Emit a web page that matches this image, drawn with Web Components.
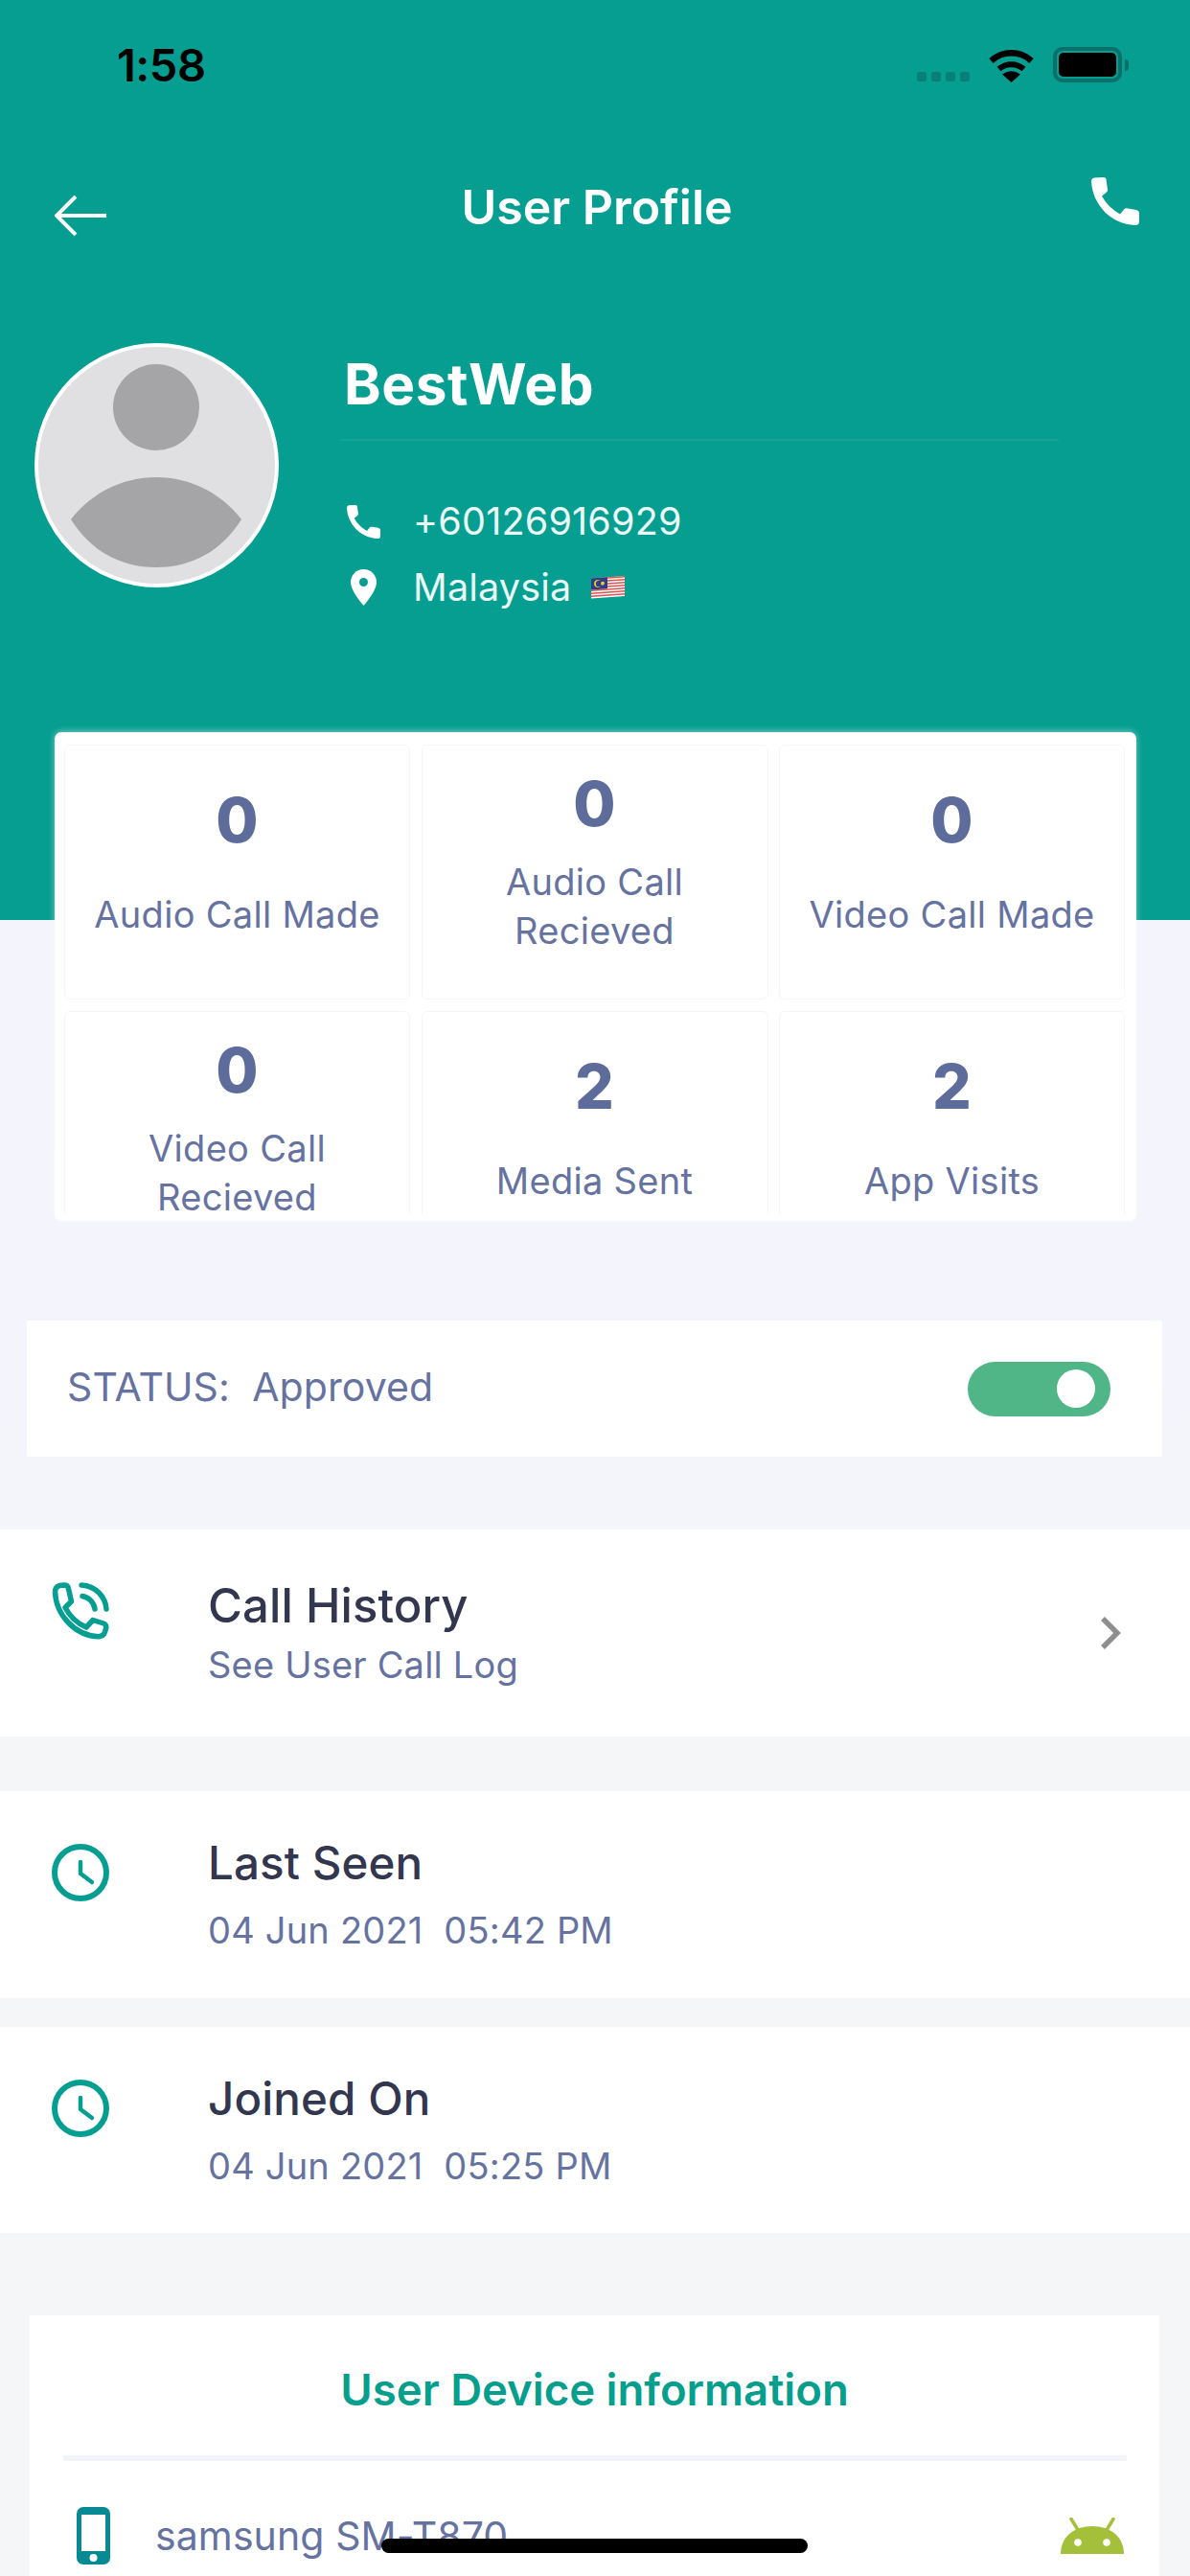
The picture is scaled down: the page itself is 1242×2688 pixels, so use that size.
<!DOCTYPE html>
<html lang="en">
<head>
<meta charset="utf-8">
<title>User Profile</title>
<style>
html,body{margin:0;padding:0;background:#F4F5F9;}
body{font-family:Inter,"Liberation Sans",sans-serif;overflow:hidden;width:1242px;height:2688px;}
</style>
</head>
<body>
<x-app>
  <x-profile-header>
    <x-status-bar time="1:58"></x-status-bar>
    <x-nav-bar>User Profile</x-nav-bar>
    <x-profile-head name="BestWeb" phone="+60126916929" country="Malaysia"></x-profile-head>
  </x-profile-header>
  <x-stat-grid>
    <x-stat-cell value="0">Audio Call Made</x-stat-cell>
    <x-stat-cell value="0" two>Audio Call<br>Recieved</x-stat-cell>
    <x-stat-cell value="0">Video Call Made</x-stat-cell>
    <x-stat-cell value="0" two>Video Call<br>Recieved</x-stat-cell>
    <x-stat-cell value="2">Media Sent</x-stat-cell>
    <x-stat-cell value="2">App Visits</x-stat-cell>
  </x-stat-grid>
  <x-status-card>STATUS:  Approved</x-status-card>
  <x-info-row icon="call" heading="Call History" compact chevron style="margin-top:76px;height:216px">See User Call Log</x-info-row>
  <x-info-row icon="clock" heading="Last Seen" style="margin-top:57px;height:216px">04 Jun 2021  05:42 PM</x-info-row>
  <x-info-row icon="clock" heading="Joined On" style="margin-top:30px;height:215px">04 Jun 2021  05:25 PM</x-info-row>
  <x-device-card heading="User Device information">samsung SM-T870</x-device-card>
  <x-home-indicator></x-home-indicator>
</x-app>
<script>
const PHONE = `<path d="M3 .5 13 0Q15 0 15.5 2L17 13Q17 15 15.5 16L11 19.5Q17 31 30 38.5L34.5 33Q36 32 38 32.5L47 34Q50 35 50 37V46Q50 50 46 50C20 49 1 28 0 4Q0 1 3 .5Z" fill="#fff"/>`;
function def(name, html, setup){
  customElements.define(name, class extends HTMLElement{
    constructor(){
      super();
      this.attachShadow({mode:'open'});
    }
    connectedCallback(){
      if(this.shadowRoot.childElementCount) return;
      const a = n => this.getAttribute(n) || '';
      this.shadowRoot.innerHTML = typeof html === 'function' ? html(a, this) : html;
    }
  });
}
def('x-app', `<style>
:host{display:flex;flex-direction:column;position:relative;width:1242px;height:2688px;overflow:hidden;
font-family:Inter,"Liberation Sans",sans-serif;background:linear-gradient(#F4F5FC 1000px,#F4F5FB 1500px,#F4F6F8 1800px);}
</style><slot></slot>`);

def('x-profile-header', `<style>
:host{display:flex;flex-direction:column;height:960px;flex:none;background:#069E91;color:#fff;}
</style><slot></slot>`);

def('x-status-bar', a => `<style>
:host{display:flex;align-items:center;justify-content:space-between;height:135px;padding:0 64px 0 122px;box-sizing:border-box;}
.t{font-size:47px;font-weight:600;color:#000;letter-spacing:-.5px;line-height:56px;}
.r{display:flex;align-items:center;gap:20px;}
.dots{display:flex;gap:5px;padding-top:25px;}
.dots i{width:10px;height:10px;border-radius:2.5px;background:#0A7F77;}
.bat{display:flex;align-items:center;gap:3px;}
.b{width:72px;height:37px;box-sizing:border-box;border:4px solid #0B6F6A;border-radius:10px;padding:2px;display:flex;}
.b i{flex:1;background:#000;border-radius:5px;}
.n{width:4px;height:12px;background:#0B6F6A;border-radius:0 4px 4px 0;}
svg{display:block;}
</style>
<span class="t">${a('time')}</span>
<div class="r">
<div class="dots"><i></i><i></i><i></i><i></i></div>
<svg width="47" height="36" viewBox="0 0 47 36"><path d="M2.5 13.5C14.5 2.5 32.5 2.5 44.5 13.5" fill="none" stroke="#000" stroke-width="6.5"/><path d="M10.5 22C18 15.5 29 15.5 36.5 22" fill="none" stroke="#000" stroke-width="6"/><path d="M23.5 36 14 27.5Q23.5 21 33 27.5Z"/></svg>
<div class="bat"><div class="b"><i></i></div><div class="n"></div></div>
</div>`);

def('x-nav-bar', `<style>
:host{display:grid;grid-template-columns:1fr auto 1fr;align-items:start;height:75px;margin-top:40px;padding:0 53px 0 57px;}
.back{margin-top:29px;display:block;}
.title{margin-top:17px;font-size:50px;font-weight:600;line-height:48px;color:#fff;}
.call{justify-self:end;margin-top:10px;display:block;}
</style>
<svg class="back" width="54" height="42" viewBox="0 0 54 42"><path d="M54 21H2M22 1 2 21 22 41" fill="none" stroke="#fff" stroke-width="4"/></svg>
<span class="title"><slot></slot></span>
<svg class="call" width="50" height="50" viewBox="0 0 50 50">${PHONE}</svg>`);

def('x-profile-head', a => `<style>
:host{display:flex;gap:64px;margin-top:108px;padding-left:36px;}
.av{width:255px;height:255px;flex:none;display:block;}
.col{width:750px;padding-top:9px;}
.name{font-size:58.5px;font-weight:700;line-height:68px;letter-spacing:.6px;color:#fff;padding-left:4px;}
.hr{height:2px;background:rgba(255,255,255,.07);margin-top:23px;}
.row{display:flex;align-items:center;height:44px;font-size:39.5px;line-height:44px;color:#EAF8F6;letter-spacing:.2px;}
.ic{width:45px;margin:0 29px 0 2px;display:flex;justify-content:center;}
.r1{margin-top:62px}.r2{margin-top:25px}
.flag{margin-left:21px;display:block;}
svg{display:block;}
</style>
<svg class="av" viewBox="0 0 255 255"><circle cx="127.5" cy="127.5" r="125.5" fill="#E0DFE1" stroke="#fff" stroke-width="4"/><circle cx="127" cy="67" r="45" fill="#A5A4A6"/><path d="M38 184C58 158 90 140 127 140S196 158 216 184C196 216 165 234 127 234S58 216 38 184Z" fill="#A5A4A6"/></svg>
<div class="col">
<div class="name">${a('name')}</div>
<div class="hr"></div>
<div class="row r1"><span class="ic"><svg width="35" height="35" viewBox="0 0 50 50">${PHONE}</svg></span><span>${a('phone')}</span></div>
<div class="row r2"><span class="ic"><svg width="27" height="38" viewBox="0 0 27 38"><path d="M13.5 0C6 0 0 6 0 13.5 0 23 13.5 38 13.5 38S27 23 27 13.5C27 6 21 0 13.5 0Z" fill="#fff"/><circle cx="13.5" cy="13.5" r="4.5" fill="#069E91"/></svg></span><span>${a('country')}</span>
<svg class="flag" width="35" height="24" viewBox="0 0 35 24"><g transform="skewY(-4) translate(0 2.5)"><rect width="35" height="21" fill="#fff"/><g fill="#D9534F"><rect width="35" height="1.5"/><rect y="3" width="35" height="1.5"/><rect y="6" width="35" height="1.5"/><rect y="9" width="35" height="1.5"/><rect y="12" width="35" height="1.5"/><rect y="15" width="35" height="1.5"/><rect y="18" width="35" height="1.5"/></g><rect width="17" height="12" fill="#2A3F86"/><circle cx="7" cy="6" r="4" fill="#F4C430"/><circle cx="8.2" cy="6" r="3.3" fill="#2A3F86"/><circle cx="12" cy="6" r="2" fill="#F4C430"/></g></svg>
</div>
</div>`);

def('x-stat-grid', `<style>
:host{display:block;flex:none;width:1129px;height:510px;margin:-196px 0 0 57px;background:#fff;border-radius:7px;box-shadow:0 -1px 6px rgba(255,255,255,.45);box-sizing:border-box;padding:13px 12px 7px 10px;}
.clip{height:100%;overflow:hidden;}
.g{display:grid;grid-template-columns:361px 362px 361px;grid-auto-rows:266px;column-gap:11.5px;row-gap:12px;}
</style><div class="clip"><div class="g"><slot></slot></div></div>`);

def('x-stat-cell', a => `<style>
:host{display:flex;flex-direction:column;align-items:center;border:1.5px solid #F6F6F9;border-radius:6px;box-sizing:border-box;padding-top:53px;--g:49px;text-align:center;}
:host([two]){padding-top:36px;--g:32px;}
.v{font-size:64px;font-weight:800;line-height:49px;color:#5E6C9B;}
.l{margin-top:var(--g);font-size:38px;line-height:51px;color:#66729F;letter-spacing:.3px;}
</style><div class="v">${a('value')}</div><div class="l"><slot></slot></div>`);

def('x-status-card', `<style>
:host{display:flex;align-items:center;justify-content:space-between;flex:none;box-sizing:border-box;width:1185px;height:142px;margin:104px 0 0 28px;padding:0 54px 0 42px;background:#fff;color:#66729F;font-size:41px;white-space:pre;letter-spacing:.1px;}
.txt{margin-top:-5px;}
.tg{width:149px;height:57px;border-radius:28.5px;background:#50B687;display:flex;align-items:center;justify-content:flex-end;padding-right:16px;box-sizing:border-box;}
.tg i{width:40px;height:40px;border-radius:50%;background:#fff;}
</style><span class="txt"><slot></slot></span><div class="tg"><i></i></div>`);

def('x-info-row', (a, el) => {
  const icon = a('icon') === 'call'
    ? `<svg width="60" height="60" viewBox="0 0 60 60" fill="none" stroke="#069E91" stroke-width="5.5" stroke-linecap="round" stroke-linejoin="round"><path d="M3.5 10Q3.5 5 8 3.5L13 3Q16.5 3 17.3 6L20.5 20 14 26.5Q22 41 36 47L43 39.5 54 43Q57 44 56.8 47.5L55.5 52Q54 56.5 49 56.7C25 56 4.5 35 3.5 10Z"/><path d="M31 3C46 4 56 15 57 28"/><path d="M32 14.5C39 16 44 21 45 28"/></svg>`
    : `<svg width="60" height="60" viewBox="0 0 60 60" fill="none" stroke="#069E91"><circle cx="30" cy="30" r="27" stroke-width="6"/><path d="M30 19V31L42 40" stroke-width="4.5" stroke-linecap="round" stroke-linejoin="round"/></svg>`;
  const chev = el.hasAttribute('chevron')
    ? `<svg class="ch" width="22" height="34" viewBox="0 0 22 34"><path d="M3 2 18 17 3 32" fill="none" stroke="#8E8E8E" stroke-width="5.5"/></svg>` : '';
  return `<style>
:host{display:flex;flex:none;background:#fff;padding:0 72px 0 54px;box-sizing:border-box;--top:47px;--g:19px;--hs:47.5px;}
:host([compact]){--top:52px;--g:10px;--hs:49px;}
.ic{margin-top:55px;width:60px;height:60px;flex:none;display:block;margin-right:103px;}
.tx{flex:1;padding-top:var(--top);white-space:pre;}
.h{font-size:var(--hs);font-weight:500;line-height:56px;color:#33364F;letter-spacing:.1px;}
.s{margin-top:var(--g);font-size:38px;line-height:46px;color:#66729F;letter-spacing:.2px;}
.ch{align-self:center;display:block;}
</style><div class="ic">${icon}</div><div class="tx"><div class="h">${a('heading')}</div><div class="s"><slot></slot></div></div>${chev}`;
});

def('x-device-card', a => `<style>
:host{display:block;flex:none;width:1179px;height:400px;margin:86px 0 0 31px;background:#fff;padding-top:50px;box-sizing:border-box;}
.h{text-align:center;font-size:45.5px;font-weight:600;line-height:56px;color:#069E8C;}
.hr{height:6px;background:#F2F4FA;margin:40px 34px 0 35px;}
.row{display:flex;align-items:center;margin-top:48px;padding:0 37px 0 49px;}
.t{flex:1;margin-left:47px;font-size:41px;line-height:46px;color:#66729F;letter-spacing:.1px;}
svg{display:block;}
</style>
<div class="h">${a('heading')}</div><div class="hr"></div>
<div class="row">
<svg width="35" height="60" viewBox="0 0 35 60"><rect width="35" height="60" rx="7" fill="#078A93"/><rect x="5" y="8" width="25" height="38" fill="#fff"/><circle cx="17.5" cy="53" r="4" fill="#fff"/></svg>
<span class="t"><slot></slot></span>
<svg width="66" height="38" viewBox="0 0 66 38"><path d="M0 38C0 20 14 9 33 9S66 20 66 38Z" fill="#A4BF3A"/><path d="M11 1.5 18 13M55 1.5 48 13" stroke="#A4BF3A" stroke-width="3.5" stroke-linecap="round"/><circle cx="18" cy="26" r="3.8" fill="#fff"/><circle cx="48" cy="26" r="3.8" fill="#fff"/></svg>
</div>`);

def('x-home-indicator', `<style>
:host{position:absolute;left:398px;bottom:24px;width:445px;height:15px;border-radius:8px;background:#000;}
</style>`);
</script>
</body>
</html>
